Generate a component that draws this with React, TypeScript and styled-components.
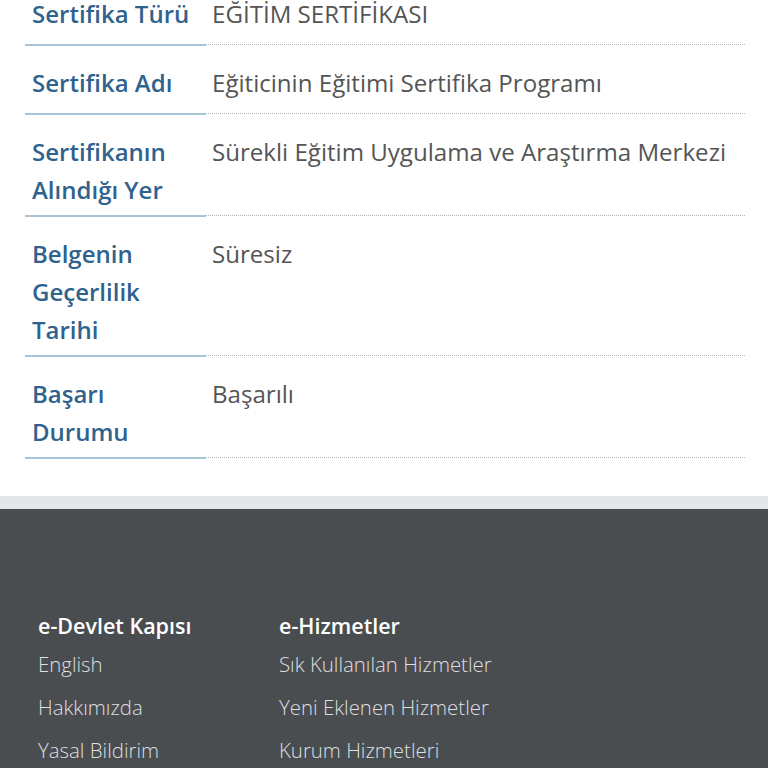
import React from "react";
import styled, { createGlobalStyle } from "styled-components";

const Global = createGlobalStyle`
  html, body { margin: 0; padding: 0; background: #ffffff; }
  body { font-family: "Open Sans", "Noto Sans", sans-serif; overflow: hidden; }
`;

const Page = styled.div`
  width: 768px;
  height: 768px;
  overflow: hidden;
  display: flex;
  flex-direction: column;
`;

const Content = styled.section`
  flex-shrink: 0;
  background: #ffffff;
  padding: 0 23px 37px 25px;
  margin-top: -23px;
`;

const Table = styled.dl`
  margin: 0;
  display: grid;
  grid-template-columns: 181px 1fr;
`;

const Label = styled.dt`
  margin: 0;
  padding: 18px 7px 6px 7px;
  min-height: 43px;
  font-size: 24px;
  line-height: 38px;
  font-weight: 600;
  color: #30628e;
  border-bottom: 2px solid #a9c3d7;
`;

const Value = styled.dd`
  margin: 0;
  padding: 18px 6px 6px 6px;
  min-height: 43px;
  font-size: 24.1px;
  line-height: 38px;
  font-weight: 400;
  color: #555555;
  border-bottom: 1px dotted #b5b5b5;
  margin-bottom: 1px;
`;

const Band = styled.div`
  flex-shrink: 0;
  height: 13px;
  background: #e4e6e8;
`;

const Footer = styled.footer`
  flex: 1 0 auto;
  background: #4a4d50;
  padding: 100px 0 0 38px;
  display: grid;
  grid-template-columns: 241px 241px;
  align-content: start;
`;

const Column = styled.div`
  display: flex;
  flex-direction: column;
`;

const Heading = styled.h4`
  margin: 0;
  font-size: 21.5px;
  line-height: 34px;
  font-weight: 600;
  color: #ffffff;
`;

const Link = styled.a`
  font-size: 20.4px;
  line-height: 43px;
  font-weight: 300;
  color: #dedfe0;
  text-decoration: none;
`;

const rows: [string, string][] = [
  ["Sertifika Türü", "EĞİTİM SERTİFİKASI"],
  ["Sertifika Adı", "Eğiticinin Eğitimi Sertifika Programı"],
  ["Sertifikanın Alındığı Yer", "Sürekli Eğitim Uygulama ve Araştırma Merkezi"],
  ["Belgenin Geçerlilik Tarihi", "Süresiz"],
  ["Başarı Durumu", "Başarılı"],
];

const footerCols = [
  { title: "e-Devlet Kapısı", links: ["English", "Hakkımızda", "Yasal Bildirim"] },
  { title: "e-Hizmetler", links: ["Sık Kullanılan Hizmetler", "Yeni Eklenen Hizmetler", "Kurum Hizmetleri"] },
];

export default function App() {
  return (
    <Page>
      <Global />
      <Content>
        <Table>
          {rows.map(([k, v]) => (
            <React.Fragment key={k}>
              <Label>{k}</Label>
              <Value>{v}</Value>
            </React.Fragment>
          ))}
        </Table>
      </Content>
      <Band />
      <Footer>
        {footerCols.map((c) => (
          <Column key={c.title}>
            <Heading>{c.title}</Heading>
            {c.links.map((l) => (
              <Link key={l} href="#">
                {l}
              </Link>
            ))}
          </Column>
        ))}
      </Footer>
    </Page>
  );
}
